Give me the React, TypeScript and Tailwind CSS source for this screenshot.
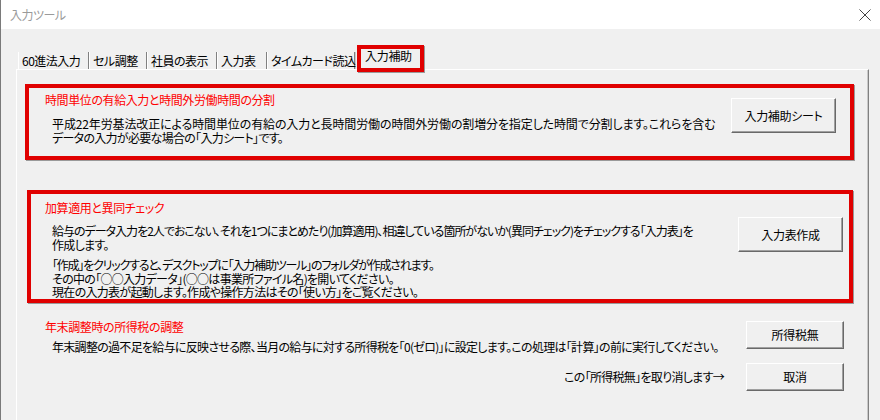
import React from "react";

const font = {
  fontFamily: '"Noto Sans CJK JP", "Liberation Sans", sans-serif',
};

function Btn({ label, w, h }: { label: string; w: string; h: string }) {
  return (
    <div
      className={`${w} ${h} shrink-0 flex items-center justify-center bg-[#f0f0f0] border border-t-white border-l-white border-b-[#696969] border-r-[#696969] shadow-[inset_-1px_-1px_0_#a0a0a0] text-[12px] leading-[14px] tracking-[-0.3px] text-black`}
    >
      {label}
    </div>
  );
}

function Tab({ label, w }: { label: string; w: string }) {
  return (
    <div
      className={`${w} h-[17px] shrink-0 border-l border-l-white border-r border-r-[#808080] shadow-[1px_0_0_#c8c8c8] pl-[3px] pt-[2px] text-[12px] leading-[14px] tracking-[-0.5px] text-black whitespace-nowrap`}
    >
      {label}
    </div>
  );
}

export default function App() {
  return (
    <div
      className="w-[880px] h-[420px] overflow-hidden bg-[#f0f0f0] border-l border-l-[#7a7a7a] flex flex-col [font-feature-settings:'palt']"
      style={font}
    >
      {/* title bar */}
      <div className="h-[29px] shrink-0 bg-white flex items-center justify-between pl-[9px] pr-[10px]">
        <span className="text-[12px] leading-[14px] tracking-[-0.5px] text-[#9a9a9a]">入力ツール</span>
        <svg width="12" height="12" viewBox="0 0 12 12" className="mr-[-1px]">
          <path d="M0.5 0.5 L11.5 11.5 M11.5 0.5 L0.5 11.5" stroke="#444" strokeWidth="1" fill="none" />
        </svg>
      </div>

      {/* tabs */}
      <div className="relative z-10 mt-[16px] ml-[17px] h-[24px] flex items-end">
        <Tab label="60進法入力" w="w-[71px]" />
        <Tab label="セル調整" w="w-[58px]" />
        <Tab label="社員の表示" w="w-[70px]" />
        <Tab label="入力表" w="w-[50px]" />
        <Tab label="タイムカード読込" w="w-[88px]" />
        <div className="ml-[2px] mb-[-3px] w-[67px] h-[27px] shrink-0 border-4 border-[#e00000] bg-[#f0f0f0] pl-[4px] text-[12px] leading-[14px] tracking-[-0.3px] text-black whitespace-nowrap shadow-[1px_1px_0_#9a9a9a]">
          入力補助
        </div>
      </div>

      {/* panel */}
      <div className="ml-[15px] w-[853px] flex-1 border-t border-l border-t-white border-l-white border-r border-r-[#808080] shadow-[inset_-1px_0_0_#c8c8c8] flex flex-col text-[12px] tracking-[-0.7px] text-black">
        {/* box 1 */}
        <div className="mt-[14px] ml-[8px] w-[829px] h-[76px] border-4 border-[#e00000] shadow-[1px_1px_0_#9a9a9a] flex items-start">
          <div className="flex-1 min-w-0 pl-[16px] pt-[5px]">
            <div className="leading-[14px] tracking-[-0.4px] text-[#ff0000] whitespace-nowrap">
              時間単位の有給入力と時間外労働時間の分割
            </div>
            <div className="mt-[10px] pl-[7px] leading-[14px] whitespace-nowrap">
              <div className="tracking-[-0.12px]">
                平成22年労基法改正による時間単位の有給の入力と長時間労働の時間外労働の割増分を指定した時間で分割します。これらを含む
              </div>
              <div>データの入力が必要な場合の「入力シート」です。</div>
            </div>
          </div>
          <div className="shrink-0 mt-[10px] mr-[14px]">
            <Btn label="入力補助シート" w="w-[105px]" h="h-[35px]" />
          </div>
        </div>

        {/* box 2 */}
        <div className="mt-[30px] ml-[10px] w-[826px] h-[113px] border-4 border-[#e00000] shadow-[1px_1px_0_#9a9a9a] flex items-start">
          <div className="flex-1 min-w-0 pl-[14px] pt-[7px]">
            <div className="leading-[14px] tracking-[-0.4px] text-[#ff0000] whitespace-nowrap">加算適用と異同チェック</div>
            <div className="mt-[9px] pl-[7px] leading-[13.5px] whitespace-nowrap">
              <div className="tracking-[-1px]">
                給与のデータ入力を2人でおこない、それを1つにまとめたり(加算適用)、相違している箇所がないか(異同チェック)をチェックする「入力表」を
              </div>
              <div>作成します。</div>
              <div className="mt-[7px] tracking-[-1.2px]">
                「作成」をクリックすると、デスクトップに「入力補助ツール」のフォルダが作成されます。
              </div>
              <div>その中の「○○入力データ」(○○は事業所ファイル名)を開いてください。</div>
              <div>現在の入力表が起動します。作成や操作方法はその「使い方」をご覧ください。</div>
            </div>
          </div>
          <div className="shrink-0 mt-[23px] mr-[6px]">
            <Btn label="入力表作成" w="w-[105px]" h="h-[35px]" />
          </div>
        </div>

        {/* section 3 */}
        <div className="mt-[17px] pl-[28px] pr-[24px] flex flex-col">
          <div className="flex items-start">
            <div className="flex-1 min-w-0">
              <div className="leading-[14px] tracking-[-0.4px] text-[#ff0000] whitespace-nowrap">年末調整時の所得税の調整</div>
              <div className="mt-[6px] pl-[7px] leading-[14px] whitespace-nowrap">
                年末調整の過不足を給与に反映させる際、当月の給与に対する所得税を「0(ゼロ)」に設定します。この処理は「計算」の前に実行してください。
              </div>
            </div>
            <div className="shrink-0 mt-[1px]">
              <Btn label="所得税無" w="w-[98px]" h="h-[28px]" />
            </div>
          </div>
          <div className="mt-[9px] flex items-center justify-end">
            <span className="mr-[22px] leading-[14px] whitespace-nowrap">この「所得税無」を取り消します→</span>
            <Btn label="取消" w="w-[98px]" h="h-[28px]" />
          </div>
        </div>
      </div>
    </div>
  );
}
